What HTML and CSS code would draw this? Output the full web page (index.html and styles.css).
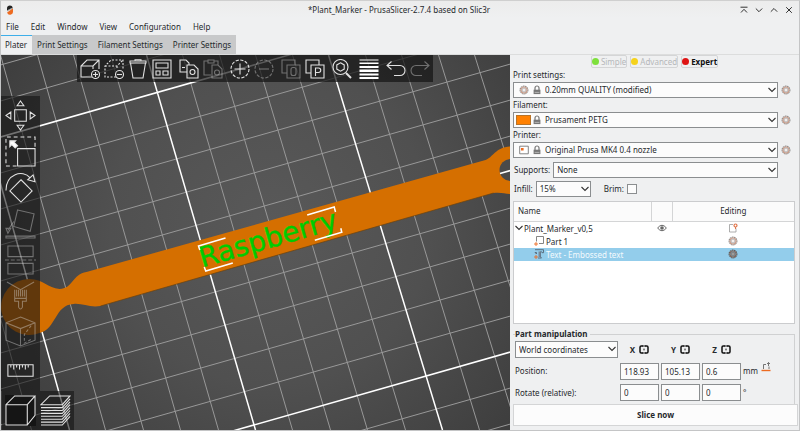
FILE: index.html
```html
<!DOCTYPE html>
<html lang="en">
<head>
<meta charset="utf-8">
<title>*Plant_Marker - PrusaSlicer-2.7.4 based on Slic3r</title>
<link rel="stylesheet" href="styles.css">
</head>
<body>
<svg class="defs" aria-hidden="true">
  <symbol id="chev" viewBox="0 0 8 6"><path d="M.5 1 4 4.500 7.500 1" fill="none" stroke="#333" stroke-width="1.1"/></symbol>
  <symbol id="gear" viewBox="0 0 10 10"><circle cx="5" cy="5" r="3.9" fill="none" stroke="#8a8a8a" stroke-width="1.1" stroke-dasharray="1.6 .5"/><circle cx="5" cy="5" r="3" fill="none" stroke="#cfa08c" stroke-width="1.1"/><circle cx="5" cy="5" r="2" fill="#f4eeec" stroke="#999" stroke-width=".7"/></symbol>
  <symbol id="lock" viewBox="0 0 8 10"><path d="M2 5V3a2 2 0 0 1 4 0v2" fill="none" stroke="#777" stroke-width="1.2"/><path d="M.6 4.7h6.8v4.4H.6z" fill="#777"/><path d="M1.6 7.4h4.8" stroke="#ccc" stroke-width=".7"/></symbol>
  <symbol id="mirror" viewBox="0 0 10 9"><path d="M4 1H2.2Q1 1 1 2.2v4.6Q1 8 2.2 8H4M6 1h1.8Q9 1 9 2.2v4.6Q9 8 7.8 8H6" fill="none" stroke="#111" stroke-width="1.5"/><path d="M5 3.6v1.8M3.5 1h3M3.5 8h3" stroke="#111" stroke-width="1"/></symbol>
</svg>
<div class="window">
  <header class="titlebar">
    <svg class="logo" viewBox="0 0 8 10"><path d="M1 5.5V3.2A3 3 0 0 1 4 .4a3 3 0 0 1 2.8 2z" fill="#222"/><path d="M7 3.3v3.2a3 3 0 0 1-5.9 1z" fill="#ed6b21"/><path d="M1 5.9 7 2.9" stroke="#777" stroke-width=".6"/></svg>
    <h1>*Plant_Marker - PrusaSlicer-2.7.4 based on Slic3r</h1>
    <div class="wm">
      <button aria-label="Keep above"><svg viewBox="0 0 8 8"><path d="M.5 1.2h7M1 6.5l3-3.2 3 3.2"/></svg></button>
      <button aria-label="Minimize"><svg viewBox="0 0 8 8"><path d="M.8 2.5 4 5.7l3.200-3.200"/></svg></button>
      <button aria-label="Maximize"><svg viewBox="0 0 8 8"><path d="M.8 5.7 4 2.500l3.200 3.200"/></svg></button>
      <button aria-label="Close"><svg viewBox="0 0 8 8"><path d="M1.200 1.200l5.600 5.600M6.800 1.200 1.200 6.800"/></svg></button>
    </div>
  </header>
  <nav class="menu">
    <button>File</button><button>Edit</button><button>Window</button><button>View</button><button>Configuration</button><button>Help</button>
  </nav>
  <div class="tabs" role="tablist">
    <button role="tab" aria-selected="true">Plater</button><button role="tab">Print Settings</button><button role="tab">Filament Settings</button><button role="tab">Printer Settings</button>
  </div>
  <main>
    <section class="plater">
      <svg class="scene" viewBox="0 0 510 375" preserveAspectRatio="xMidYMid slice">
        <defs><radialGradient id="bed" gradientUnits="userSpaceOnUse" cx="270" cy="170" r="320"><stop offset="0" stop-color="#595959"/><stop offset=".5" stop-color="#505050"/><stop offset="1" stop-color="#3d3d3d"/></radialGradient></defs>
        <path d="M0 0h510v375H0z" fill="url(#bed)"/>
        <path class="minor" d="M-109 0-7 375M-73 0 31 375M0 0 105 375M37 0 143 375M73 0 180 375M110 0 218 375M182 0 292 375M219 0 330 375M255 0 367 375M292 0 405 375M365 0 479 375M401 0 517 375M438 0 554 375M474 0 592 375M0 10 510-135M0 46 510-99M0 118 510-27M0 154 510 9M0 190 510 45M0 226 510 81M0 298 510 153M0 334 510 189M0 370 510 225M0 406 510 261M0 478 510 333M0 514 510 369"/>
        <path class="major" d="M-36 0 69 375M146 0 255 375M328 0 442 375M0 82 510-63M0 262 510 117M0 442 510 297"/>
        <path d="M29 224c14 0 18 9 30 10 13 0 13-15 27-17L485 105c7-2 10-13 25-13.500V139c-6 0-9-2-17-1L100 251c-11 2-18-3-27-2-19 1-17 25-34 29A28 28 0 1 1 29 224z" fill="#d56f00"/>
        <circle cx="510" cy="115" r="11" fill="#4a4a4a"/>
        <path d="M499.500 118.500 510 115.500" stroke="#fff" stroke-width="1.500"/>
        <path d="M100 251 493 138" fill="none" stroke="#6b430f" stroke-width=".7"/>
        <text class="emboss" transform="translate(201.500 212.500) rotate(-16)">Raspberry</text>
        <path class="sel" d="M225 183l-27 8 1.300 4M203.700 212l1.600 4 27-8M306.700 160l27-8 1.300 5M314.300 185.300l27-8-1-4"/>
      </svg>
      <div class="toolbar">
        <button aria-label="Add"><svg viewBox="0 0 20 20"><path d="M12 18H1V7l6-6h12v9M1 7h12l6-6M13 7v3"/><circle cx="15.500" cy="15.500" r="4"/><path d="M13 15.500h5M15.500 13v5"/></svg></button>
        <button aria-label="Delete"><svg viewBox="0 0 20 20"><path stroke-dasharray="2 1.500" d="M12 18H1V7l6-6h12v9M1 7h12l6-6M13 7v3"/><circle cx="15.500" cy="15.500" r="4"/><path d="M13 15.500h5"/></svg></button>
        <button aria-label="Delete all"><svg viewBox="0 0 20 20"><path d="M2.500 4 5 19h10l2.500-15M2 2h16v2H2zM7 2V.700h6V2"/></svg></button>
        <button aria-label="Arrange"><svg viewBox="0 0 20 20"><path d="M1 1h18v18H1zM4 4h12v5H4zM4 12h4v4H4zM11 12h5v4h-5z"/></svg></button>
        <button class="gap" aria-label="Copy"><svg viewBox="0 0 20 20"><path d="M8 13H1V1h6l3 3v2M8 6h7l4 4v9H8z"/><circle cx="13.500" cy="13" r="2.500"/><path d="M3 8.500h3"/></svg></button>
        <button class="off" aria-label="Paste"><svg viewBox="0 0 20 20"><path d="M8 16H1V2h4M11 2h4v4M5 1h6v3H5zM9 6h6l4 4v9H9z"/><circle cx="14" cy="13.500" r="2.500"/></svg></button>
        <button class="gap" aria-label="Add instance"><svg viewBox="0 0 20 20"><circle cx="10" cy="10" r="9" stroke-dasharray="3.200 1.510"/><path d="M4.500 10h11M10 4.500v11"/></svg></button>
        <button class="off" aria-label="Remove instance"><svg viewBox="0 0 20 20"><circle cx="10" cy="10" r="9" stroke-dasharray="3.200 1.510"/><path d="M5 10h10"/></svg></button>
        <button class="gap off" aria-label="Split to objects"><svg viewBox="0 0 20 20"><path d="M6 14H1V1h13v5M6 6h13v13H6z"/><rect x="10" y="8.500" width="5" height="8" rx="2"/></svg></button>
        <button aria-label="Split to parts"><svg viewBox="0 0 20 20"><path d="M6 14H1V1h13v5M6 6h13v13H6zM10.500 17V9h3a2.200 2.200 0 0 1 0 4.500h-3"/></svg></button>
        <button class="gap" aria-label="Search"><svg viewBox="0 0 20 20"><circle cx="8.500" cy="8" r="7.500"/><path d="m8.500 3.800 3.700 2.100v4.200l-3.700 2.100-3.700-2.100V5.900z"/><path d="m14 14 5 5" stroke-width="2"/></svg></button>
        <button class="gap" aria-label="Variable layer height"><svg viewBox="0 0 20 20"><path fill="#fff" stroke="none" d="M.5.500h19v1H.500zM.500 3.500h19V5H.500zM.500 7h19v2H.500zM.500 10.500h19V13H.500zM.500 14.500h19v2H.500zM.500 18h19v2H.500z"/></svg></button>
        <button class="gap" aria-label="Undo"><svg viewBox="0 0 20 20"><path d="m5.500 2.500-4.500 4 4.500 4M1.500 6.500H14a5 5 0 0 1 0 10H8"/></svg></button>
        <button class="off" aria-label="Redo"><svg viewBox="0 0 20 20"><path d="m14.500 2.500 4.500 4-4.500 4M18.500 6.500H6a5 5 0 0 0 0 10h6"/></svg></button>
      </div>
      <div class="gizmos">
        <button aria-label="Move"><svg viewBox="0 0 32 32"><path d="M10 10h12v12H10zM16 1l3.500 5h-7zM16 31l3.500-5h-7zM1 16l5-3.500v7zM31 16l-5-3.500v7z"/></svg></button>
        <button aria-label="Scale"><svg viewBox="0 0 32 32"><path stroke-dasharray="4 3" d="M12 31H1V1h30v12"/><path d="M13 13h18v18H13z"/><path d="M5 5h6L9.500 6.500l3.500 3.500-2.500 2.500L7 9l-2 2z" fill="#fff"/></svg></button>
        <button aria-label="Rotate"><svg viewBox="0 0 32 32"><path d="M16.500 8 28 19.500 16.500 31 5 19.500zM1 19C1 2 18-3 26 6M23.500 8l5.500-5 2 7z"/></svg></button>
        <button class="off" aria-label="Place on face"><svg viewBox="0 0 32 32"><path d="m13 2 17 4-4 18-17-5zM1 29h30v2H1zM9 14 3 23M1 21h5l-3 5z"/></svg></button>
        <button class="off" aria-label="Cut"><svg viewBox="0 0 32 32"><path d="M3 2h26v11H3zM3 20h26v11H3z"/><path d="M0 16.500h32" stroke-dasharray="4 2"/></svg></button>
        <button class="off" aria-label="Paint-on supports"><svg viewBox="0 0 32 32"><path d="M2 2l14 8L30 2M10 10v9h12v-9M12 10v7M14 10v7M16 10v7M18 10v7M20 10v7M10 19v3h4v6q2 4 4 0v-6h4v-3"/></svg></button>
        <button class="off" aria-label="Seam painting"><svg viewBox="0 0 32 32"><path d="M16 1 31 7v18l-15 6-15-6V7zM1 7l15 6 15-6M16 13v18"/><path stroke-dasharray="3 2" d="m27 10-7 9v9l7-4"/></svg></button>
        <button class="measure" aria-label="Measure"><svg viewBox="0 0 32 32"><path d="M3 10h26v12H3zM6 10v3M9 10v5M12 10v3M15 10v5M18 10v3M21 10v5M24 10v3"/></svg></button>
      </div>
      <div class="views">
        <button aria-label="3D editor view"><svg viewBox="0 0 32 32"><path d="M1 10h22v21H1zM1 10l9-9h21l-8 9M31 1v20l-8 10"/></svg></button>
        <button aria-label="Preview"><svg viewBox="0 0 32 32"><path d="M1 10 10 1h21l-8 9zM1 13h22l8-9M1 16h22l8-9M1 19h22l8-9M1 22h22l8-9M1 25h22l8-9M1 28h22l8-9M1 31h22l8-9"/></svg></button>
      </div>
    </section>
    <aside>
      <div class="modes">
        <button><i class="green"></i>Simple</button><button><i class="yellow"></i>Advanced</button><button class="on"><i class="red"></i>Expert</button>
      </div>
      <label class="cap" for="print">Print settings:</label>
      <div class="preset">
        <div class="combo icons"><select id="print"><option>0.20mm QUALITY (modified)</option></select><span class="pic"><svg class="g"><use href="#gear"/></svg></span><svg class="lock"><use href="#lock"/></svg><svg class="chev"><use href="#chev"/></svg></div>
        <button aria-label="Edit print preset"><svg class="g"><use href="#gear"/></svg></button>
      </div>
      <label class="cap" for="fil">Filament:</label>
      <div class="preset">
        <div class="combo icons"><select id="fil"><option>Prusament PETG</option></select><span class="pic swatch"></span><svg class="lock"><use href="#lock"/></svg><svg class="chev"><use href="#chev"/></svg></div>
        <button aria-label="Edit filament preset"><svg class="g"><use href="#gear"/></svg></button>
      </div>
      <label class="cap" for="prn">Printer:</label>
      <div class="preset">
        <div class="combo icons"><select id="prn"><option>Original Prusa MK4 0.4 nozzle</option></select><span class="pic"><svg class="g" viewBox="0 0 10 10"><path d="M.7 1.200h8.600v7.600H.700z" fill="#fff" stroke="#777" stroke-width=".9"/><path d="M2 3h2.600v2.500H2z" fill="#ed6b21"/></svg></span><svg class="lock"><use href="#lock"/></svg><svg class="chev"><use href="#chev"/></svg></div>
        <button aria-label="Edit printer preset"><svg class="g"><use href="#gear"/></svg></button>
      </div>
      <div class="line supports">
        <label for="sup">Supports:</label>
        <div class="combo"><select id="sup"><option>None</option></select><svg class="chev"><use href="#chev"/></svg></div>
      </div>
      <div class="line infill">
        <label for="inf">Infill:</label>
        <div class="combo short"><select id="inf"><option>15%</option></select><svg class="chev"><use href="#chev"/></svg></div>
        <label class="brim" for="brim">Brim:</label><input type="checkbox" id="brim">
      </div>
      <div class="list">
        <table>
          <thead><tr><th class="name">Name</th><th class="vis" aria-label="Visible"></th><th>Editing</th></tr></thead>
          <tbody>
            <tr><td><span class="cell"><svg class="chev"><use href="#chev"/></svg>Plant_Marker_v0,5</span></td><td><svg class="eye" viewBox="0 0 10 8"><path d="M.6 4Q5-1.500 9.400 4 5 9.500.600 4z" fill="none" stroke="#666" stroke-width="1"/><circle cx="5" cy="4" r="1.800" fill="#666"/></svg></td><td><svg class="g" viewBox="0 0 10 10"><path d="M5 1.500H1.500v7.500h6.500V5.500" fill="none" stroke="#999" stroke-width=".8"/><circle cx="7.500" cy="2.500" r="1.500" fill="none" stroke="#e0744a" stroke-width="1.200"/><path d="M7.500 4v2" stroke="#e0744a"/></svg></td></tr>
            <tr><td><span class="cell child"><svg class="g" viewBox="0 0 10 10"><path d="M2.500 5.500v-5h7v7H5" fill="none" stroke="#777" stroke-width=".9"/><path d="M0 8h4M2 6v4" stroke="#ed6b21" stroke-width=".9"/></svg>Part 1</span></td><td></td><td><svg class="g"><use href="#gear"/></svg></td></tr>
            <tr class="picked"><td><span class="cell child"><svg class="g" viewBox="0 0 10 10"><path d="M1 .700h8.500v3H8l-.500-1H6.500V8l1 1H4M2.500 5V3.500H1z" fill="none" stroke="#567" stroke-width=".9"/><path d="M4.500 2.500h2V8h-2z" fill="#789"/><path d="M0 8h4M2 6v4" stroke="#ed6b21" stroke-width=".9"/></svg>Text - Embossed text</span></td><td></td><td><svg class="g dark"><use href="#gear"/></svg></td></tr>
          </tbody>
        </table>
      </div>
      <fieldset>
        <legend>Part manipulation</legend>
        <div class="manip">
          <div class="combo coords"><select aria-label="Coordinate system"><option>World coordinates</option></select><svg class="chev"><use href="#chev"/></svg></div>
          <b class="axis">X<svg><use href="#mirror"/></svg></b><b class="axis">Y<svg><use href="#mirror"/></svg></b><b class="axis">Z<svg><use href="#mirror"/></svg></b><span></span>
          <label for="px">Position:</label><input id="px" value="118.93"><input aria-label="Position Y" value="105.13"><input aria-label="Position Z" value="0.6"><span class="unit">mm<svg class="drop" viewBox="0 0 10 10"><path d="M2.500 7V2.500H5M8 4.500V7M7.500 4V.500M6 2l1.500-1.500L9 2" fill="none" stroke="#666" stroke-width=".9"/><path d="M.5 8.500h9" stroke="#ed6b21" stroke-width="1.400"/></svg></span>
          <label for="rx">Rotate (relative):</label><input id="rx" value="0"><input aria-label="Rotate Y" value="0"><input aria-label="Rotate Z" value="0"><span class="unit">°</span>
        </div>
      </fieldset>
      <button class="slice">Slice now</button>
    </aside>
  </main>
</div>
</body>
</html>
```
FILE: styles.css
```css
* { box-sizing: border-box; }
body { margin: 0; background: #eff0f1; color: #26292c; font: 8px/14px "Noto Sans", sans-serif; }
button, input, select { margin: 0; padding: 0; border: 0; background: none; color: inherit; font: inherit; }
svg { display: block; flex: none; }
.defs { position: absolute; width: 0; height: 0; }
.window { display: flex; flex-direction: column; min-height: 100vh; border: 1px solid #c4c5c6; border-top-color: #cfcfcf; }

.titlebar { display: flex; align-items: center; height: 17px; padding: 0 5px; background: linear-gradient(#ececec, #eff0f1); }
.logo { width: 8px; height: 10px; }
h1 { flex: 1; margin: 0 0 0 44px; font: inherit; text-align: center; }
.wm { display: flex; gap: 7px; margin-right: 1px; }
.wm svg { width: 8px; height: 8px; fill: none; stroke: #333; stroke-width: 1; }

.menu { display: flex; height: 17px; }
.menu button { padding: 0 6px; }
.menu button:first-child { padding-left: 5px; }

.tabs { display: flex; height: 20px; border-bottom: 1px solid #dcdddd; }
.tabs button { padding: 0 5px; background: #c8c9ca; }
.tabs [aria-selected] { padding: 0 5px 0 4px; border-top: 1px solid #3daee9; background: #eff0f1; }

main { display: grid; flex: 1; grid-template-columns: minmax(0, 1fr) 289px; }
.plater { position: relative; overflow: hidden; background: #444; }
.scene { position: absolute; inset: 0; width: 100%; height: 100%; }
.minor { fill: none; stroke: #989898; stroke-width: 1; }
.major { fill: none; stroke: #fff; stroke-width: 1.5; }
.sel { fill: none; stroke: #fff; stroke-width: 1.500; }
.emboss { fill: #0c0; stroke: #0c0; stroke-width: 0.4; font: 28px "DejaVu Sans", sans-serif; }

.plater button { display: block; }
.plater button svg { width: 100%; height: 100%; fill: none; stroke: #e2e2e2; stroke-width: 1.100; }
.plater .off svg { opacity: .4; }
.toolbar { position: absolute; top: 0; left: 76px; display: flex; gap: 4px; padding: 4px 3px 3px; background: rgba(20, 20, 20, .7); }
.toolbar button { width: 20px; height: 20px; }
.toolbar .gap { margin-left: 3px; }
.gizmos { position: absolute; top: 41px; left: 0; display: flex; flex-direction: column; gap: 5px; padding: 4px 4px 5px; background: rgba(20, 20, 20, .6); }
.gizmos button { width: 31px; height: 31px; }
.gizmos .measure { margin-top: 3px; }
.views { position: absolute; bottom: 0; left: 1px; display: flex; gap: 4px; padding: 4px 3px; background: rgba(20, 20, 20, .6); }
.views button { width: 31px; height: 31px; }
.views button:first-child { background: #151515; }

aside { display: flex; flex-direction: column; padding: 0 0 4px 3px; }
.modes { display: flex; justify-content: center; gap: 3px; height: 13px; margin-right: 3px; }
.modes button { display: flex; align-items: center; gap: 2px; height: 13px; border: 1px solid #d4d5d6; border-radius: 2px; color: #b5b7b9; }
.modes .on { color: #111; font-weight: 700; }
.modes i { width: 7px; height: 7px; border-radius: 50%; }
.green { background: #7ee03c; }
.yellow { background: #f5d21c; }
.red { background: #de1414; }

.cap { height: 14px; }
.preset { display: grid; grid-template-columns: minmax(0, 1fr) 10px; align-items: center; gap: 3px; margin-right: 8px; }
.combo { position: relative; flex: 1; height: 16px; }
.combo select { display: block; width: 100%; height: 100%; padding: 0 14px 0 3px; border: 1px solid #8b8e90; border-radius: 0; background: #fcfcfc; appearance: none; line-height: 14px; }
.chev { width: 8px; height: 6px; }
.combo .chev { position: absolute; top: 5px; right: 2px; pointer-events: none; }
.icons select { padding-left: 31px; }
.pic { position: absolute; top: 3px; left: 6px; pointer-events: none; }
.swatch { left: 3px; width: 15px; height: 10px; border: 1px solid #b87328; background: #ff8000; }
.combo .lock { position: absolute; top: 3px; left: 20px; width: 8px; height: 10px; pointer-events: none; }
.g { width: 10px; height: 10px; }

.line { display: flex; align-items: center; gap: 3px; margin-right: 21px; padding-left: 1px; }
.supports { margin-top: 4px; }
.infill { margin-top: 3px; }
.infill .short { flex: none; width: 55px; }
.brim { margin-left: 10px; }
[type=checkbox] { width: 10px; height: 10px; border: 1px solid #8b8e90; background: #fcfcfc; appearance: none; }

.list { flex: 1; margin: 4px 4px 3px 0; border: 1px solid #cbccce; background: #fff; }
table { width: 100%; border-collapse: collapse; table-layout: fixed; }
th { height: 19px; padding: 0; border-bottom: 1px solid #d4d5d6; background: #fbfbfb; font-weight: 400; }
th + th { border-left: 1px solid #d4d5d6; }
.name { width: 137px; padding-left: 4px; text-align: left; }
.vis { width: 21px; }
td { height: 13px; padding: 0; line-height: 13px; }
td > svg { margin: 0 auto; }
.cell { display: flex; align-items: center; gap: 1px; padding-left: 1px; white-space: nowrap; }
.child { gap: 2px; padding-left: 20px; }
.eye { width: 10px; height: 8px; }
.picked { background: #93cdeb; color: #f4fafd; }
.dark { filter: brightness(.65); }

fieldset { min-width: 0; margin: 0 4px 0 0; padding: 0 0 3px 2px; border: solid #d0d1d2; border-width: 1px 1px 0 0; }
legend { padding: 0 2px 0 0; font-weight: 700; }
.manip { display: grid; grid-template-columns: 103px 39px 39px 39px 1fr; align-items: center; gap: 4px 2px; }
.manip input { width: 100%; height: 17px; padding: 0 3px; border: 1px solid #8b8e90; background: #fcfcfc; }
.manip .combo { height: 17px; }
.axis { display: flex; align-items: center; justify-content: center; gap: 4px; }
.axis svg { width: 10px; height: 9px; }
.unit { display: flex; align-items: center; gap: 3px; }
.drop { width: 10px; height: 10px; margin-bottom: 8px; }
.slice { height: 22px; margin-right: 1px; border: 1px solid #d4d5d6; background: #fcfcfc; font-weight: 700; }
```
